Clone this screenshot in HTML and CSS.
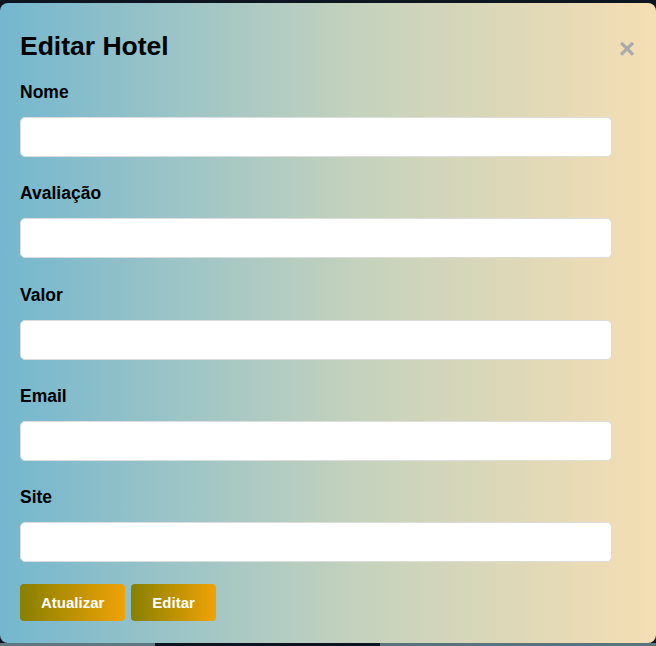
FILE: index.html
```html
<!DOCTYPE html>
<html lang="pt">
<head>
<meta charset="utf-8">
<title>Editar Hotel</title>
<link rel="stylesheet" href="styles.css">
</head>
<body>
<div class="modal">
  <div class="modal-header">
    <h2 class="modal-title">Editar Hotel</h2>
    <span class="close">&times;</span>
  </div>
  <form class="form">
    <div class="field">
      <label class="label">Nome</label>
      <input class="input" type="text">
    </div>
    <div class="field">
      <label class="label">Avaliação</label>
      <input class="input" type="text">
    </div>
    <div class="field">
      <label class="label">Valor</label>
      <input class="input" type="text">
    </div>
    <div class="field">
      <label class="label">Email</label>
      <input class="input" type="text">
    </div>
    <div class="field field-last">
      <label class="label">Site</label>
      <input class="input" type="text">
    </div>
    <div class="actions">
      <button type="button" class="btn">Atualizar</button>
      <button type="button" class="btn">Editar</button>
    </div>
  </form>
</div>
</body>
</html>
```
FILE: styles.css
```css
html {
  background:
    linear-gradient(to right, #5d7880 0, #5d7880 155px, #0c1520 155px, #0c1520 380px, #5a727a 380px) bottom / 100% 3px no-repeat,
    #0c1520;
  min-height: 100%;
}
body {
  margin: 0;
  padding-top: 3px;
  font-family: "Liberation Sans", Arial, sans-serif;
}
.modal {
  box-sizing: border-box;
  width: 656px;
  height: 640px;
  border-radius: 8px;
  background: linear-gradient(to right, #74b7cf 0%, #c5d2bd 55%, #f5deb3 100%);
  padding: 9px 20px 22px 20px;
}
.modal-header {
  display: flex;
  justify-content: space-between;
  align-items: center;
  height: 28px;
  margin-top: 20px;
}
.modal-title {
  margin: 0;
  font-size: 26.5px;
  line-height: 28px;
  font-weight: bold;
  color: #000;
}
.close {
  color: #aaa;
  font-size: 28px;
  font-weight: bold;
  line-height: 28px;
  margin-top: 6px;
  margin-right: 1px;
}
.form {
  display: flex;
  flex-direction: column;
  margin-top: 22px;
}
.field {
  display: flex;
  flex-direction: column;
  margin-bottom: 26.25px;
}
.field-last {
  margin-bottom: 22px;
}
.label {
  font-size: 17.5px;
  line-height: 20px;
  font-weight: bold;
  color: #000;
  margin-bottom: 15px;
}
.input {
  box-sizing: border-box;
  width: 592px;
  height: 40px;
  border: 1px solid #ddd;
  border-radius: 5px;
  background: #fff;
  margin: 0;
  padding: 8px;
  font-size: 16px;
}
.actions {
  display: flex;
  gap: 6px;
}
.btn {
  height: 37px;
  padding: 0 21px;
  border: none;
  border-radius: 4px;
  background: linear-gradient(to right, #878000, #f0a206);
  color: #fff;
  font-family: "Liberation Sans", Arial, sans-serif;
  font-size: 15px;
  font-weight: bold;
}
```
